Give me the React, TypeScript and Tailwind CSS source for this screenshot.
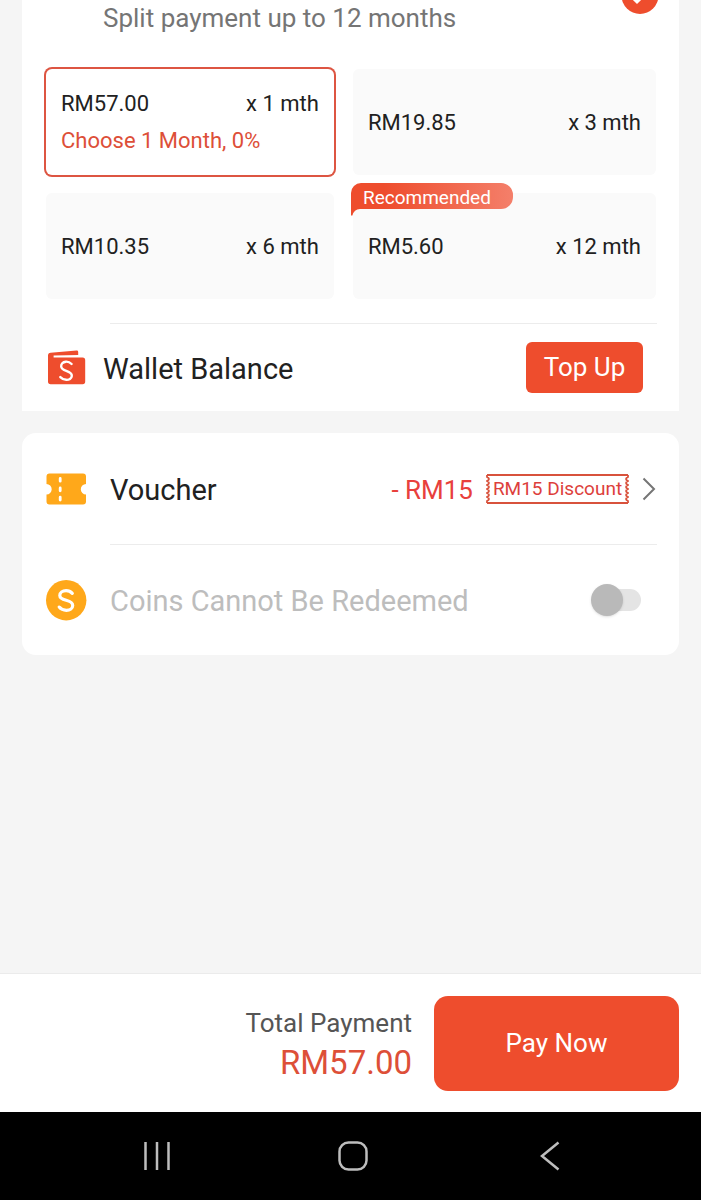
import { useState } from 'react';

interface Plan {
  months: number;
  amount: string;
  note?: string;
  recommended?: boolean;
}

const PLANS: Plan[] = [
  { months: 1, amount: 'RM57.00', note: 'Choose 1 Month, 0%' },
  { months: 3, amount: 'RM19.85' },
  { months: 6, amount: 'RM10.35' },
  { months: 12, amount: 'RM5.60', recommended: true },
];

function WalletIcon() {
  return (
    <svg width="38" height="36" viewBox="0 0 38 36" aria-hidden="true">
      <path d="M0 5.6Q0 3 2.6 2.8L28.6 .6Q30.2 .5 30.2 2V5L5.6 5.6V7.6H34.6Q37.2 7.6 37.2 10.2V31.6Q37.2 34.2 34.6 34.2H2.6Q0 34.2 0 31.6Z" fill="#ee4d2d" />
      <path d="M23.6 14C21.8 12.2 19.8 11.5 17.8 11.7C14.8 12 12.9 14 13.2 16.6C13.5 19 15.8 20 18.3 20.9C21.4 22 24 23.1 23.8 25.9C23.6 28.5 21 30 18.2 29.8C15.8 29.7 13.9 28.7 12.3 27.1" fill="none" stroke="#fff" strokeWidth="2.4" strokeLinecap="round" />
    </svg>
  );
}

function VoucherIcon() {
  return (
    <svg width="41" height="32" viewBox="0 0 41 32" aria-hidden="true">
      <path d="M3.5.5H37Q40 .5 40 3.5V11A5.2 5.2 0 0 0 40 21.4V28.5Q40 31.5 37 31.5H3.5Q.5 31.5 .5 28.5V21.4A5.2 5.2 0 0 0 .5 11V3.5Q.5 .5 3.5 .5Z" fill="#ffa81a" />
      <path d="M14.2 5.5V8.2M14.2 15V17.8M14.2 24.2V27" stroke="#fff" strokeWidth="2.8" strokeLinecap="round" />
    </svg>
  );
}

function CoinIcon() {
  return (
    <svg width="41" height="41" viewBox="0 0 41 41" aria-hidden="true">
      <circle cx="20.2" cy="20.2" r="20.2" fill="#ffa81a" />
      <path d="M26.3 13.4C24.5 11.4 22.5 10.6 20.1 10.6C16.5 10.6 13.8 12.6 13.8 15.4C13.8 18.4 16.7 19.3 20.2 20.2C23.9 21.1 26.7 22.3 26.7 25.5C26.7 28.4 23.9 30.3 20.4 30.3C17.4 30.3 14.9 29.2 13.2 27.1" fill="none" stroke="#fff" strokeWidth="3.2" strokeLinecap="round" />
    </svg>
  );
}

/** Ribbon that hangs over the corner of the recommended plan */
function RecommendedTag() {
  return (
    <span className="absolute -top-2.5 -left-0.5 flex h-[26px] w-[162px] items-center pt-0.5 pl-3 text-[19px] text-white">
      <svg className="absolute top-0 left-0" width="162" height="34" viewBox="0 0 162 34" aria-hidden="true">
        <defs>
          <linearGradient id="tag" x1="0" x2="1">
            <stop offset="0.2" stopColor="#ee4d2d" />
            <stop offset="1" stopColor="#f47f6a" />
          </linearGradient>
        </defs>
        <path d="M10 0H150A12 12 0 0 1 162 12V14A12 12 0 0 1 150 26H9Q3 26 1.4 32.6H0V10A10 10 0 0 1 10 0Z" fill="url(#tag)" />
      </svg>
      <span className="relative">Recommended</span>
    </span>
  );
}

function PlanOption({ plan, checked, onSelect }: { plan: Plan; checked: boolean; onSelect: () => void }) {
  return (
    <label
      className={`relative flex h-[106px] cursor-pointer flex-col justify-center rounded-md px-[15px] text-[22px] leading-[37px] text-[#212121] ${
        checked ? 'bg-white ring-2 ring-[#dd5542]' : 'bg-[#fafafa]'
      }`}
    >
      <input type="radio" name="plan" className="sr-only" checked={checked} onChange={onSelect} />
      {plan.recommended && <RecommendedTag />}
      <span className="flex justify-between">
        <span>{plan.amount}</span>
        <span>x {plan.months} mth</span>
      </span>
      {checked && plan.note && <span className="text-[#dd4f38]">{plan.note}</span>}
    </label>
  );
}

function DiscountBadge() {
  return (
    <span className="relative flex h-[30px] w-[143px] items-center justify-center pt-0.5 text-[19px] text-[#dd3f3c]">
      <svg className="absolute inset-0" width="143" height="30" viewBox="0 0 143 30" fill="none" stroke="#d8523c" strokeWidth="1.8" aria-hidden="true">
        <path d="M1 1H142M1 29H142" />
        <path d="M1 1V3Q5 5 1 7Q5 9 1 11Q5 13 1 15Q5 17 1 19Q5 21 1 23Q5 25 1 27V29" />
        <path d="M142 1V3Q138 5 142 7Q138 9 142 11Q138 13 142 15Q138 17 142 19Q138 21 142 23Q138 25 142 27V29" />
      </svg>
      <span className="relative">RM15 Discount</span>
    </span>
  );
}

export default function App() {
  const [months, setMonths] = useState(1);

  return (
    <div className="flex min-h-screen flex-col bg-[#f5f5f5] font-[Roboto,sans-serif] text-[#212121]">
      <main className="flex flex-1 flex-col gap-[22px] px-[22px] pb-6">
        <section className="bg-white">
          <div className="flex h-[69px] items-start justify-between pr-5 pl-[81px]">
            <p className="text-[26px] leading-9 text-[#757575]">Split payment up to 12 months</p>
            <svg width="38" height="15" viewBox="0 23 38 15" role="img" aria-label="Selected">
              <circle cx="19" cy="18.5" r="18.5" fill="#ee4d2d" />
              <path d="M10 19L16 25L27 14" fill="none" stroke="#fff" strokeWidth="3" />
            </svg>
          </div>

          <div
            role="radiogroup"
            aria-label="Instalment plan"
            className="grid grid-cols-[19fr_20fr] gap-x-[19px] gap-y-[18px] pr-[23px] pl-6"
          >
            {PLANS.map((plan) => (
              <PlanOption
                key={plan.months}
                plan={plan}
                checked={plan.months === months}
                onSelect={() => setMonths(plan.months)}
              />
            ))}
          </div>

          <div className="mt-6 mr-[22px] ml-[88px] border-t border-[#ececec]" />
          <div className="flex h-[87px] items-center pr-9 pl-6">
            <div className="w-[57px] pl-0.5">
              <WalletIcon />
            </div>
            <h2 className="flex-1 pt-1 text-[29px]">Wallet Balance</h2>
            <button type="button" className="h-[51px] w-[117px] rounded-md bg-[#ee4d2d] text-[26px] text-white">
              Top Up
            </button>
          </div>
        </section>

        <section className="rounded-[14px] bg-white pr-[22px] pl-6">
          <div className="flex h-[111px] items-center">
            <div className="w-16">
              <VoucherIcon />
            </div>
            <h2 className="flex-1 pt-1 text-[29px]">Voucher</h2>
            <button type="button" className="flex items-center gap-[13px]">
              <span className="pt-1 text-[26px] text-[#e8403c]">- RM15</span>
              <DiscountBadge />
              <svg width="15" height="24" viewBox="0 0 15 24" fill="none" stroke="#757575" strokeWidth="2" aria-hidden="true">
                <path d="M1.5 1.5L12 12L1.5 22.5" />
              </svg>
            </button>
          </div>
          <div className="ml-16 border-t border-[#ececec]" />
          <div className="flex h-[110px] items-center pr-4">
            <div className="w-16">
              <CoinIcon />
            </div>
            <label htmlFor="coins" className="flex-1 pt-1 text-[29px] text-[#bdbdbd]">
              Coins Cannot Be Redeemed
            </label>
            <span className="relative flex h-8 w-[50px] items-center">
              <span className="ml-2 h-[22px] w-[42px] rounded-full bg-[#e4e4e4]" />
              <input
                id="coins"
                type="checkbox"
                role="switch"
                disabled
                className="absolute top-0 left-0 size-8 appearance-none rounded-full bg-[#b9b9b9] shadow"
              />
            </span>
          </div>
        </section>
      </main>

      <footer>
        <div className="flex h-[139px] items-center justify-end gap-[22px] border-t border-[#ebebeb] bg-white pr-[22px]">
          <div className="text-right">
            <p className="text-[26px] leading-10 text-[#555]">Total Payment</p>
            <p className="text-[33px] leading-10 text-[#dd4f38]">RM57.00</p>
          </div>
          <button type="button" className="h-[95px] w-[245px] rounded-[14px] bg-[#ee4d2d] text-[26px] text-white">
            Pay Now
          </button>
        </div>

        <nav aria-label="System" className="grid h-[88px] grid-cols-3 place-items-center bg-black pr-[53px] pl-[59px] text-[#bdbdbd]">
          <button type="button" aria-label="Recent apps">
            <svg width="28" height="30" viewBox="0 0 28 30" stroke="currentColor" strokeWidth="2.5" aria-hidden="true">
              <path d="M2.5 1V29M14 1V29M25.5 1V29" />
            </svg>
          </button>
          <button type="button" aria-label="Home">
            <svg width="30" height="30" viewBox="0 0 30 30" fill="none" stroke="currentColor" strokeWidth="2.5" aria-hidden="true">
              <rect x="1.5" y="1.5" width="27" height="27" rx="9" />
            </svg>
          </button>
          <button type="button" aria-label="Back">
            <svg width="20" height="30" viewBox="0 0 20 30" fill="none" stroke="currentColor" strokeWidth="2.5" aria-hidden="true">
              <path d="M18.5 1.5L2 15L18.5 28.5" />
            </svg>
          </button>
        </nav>
      </footer>
    </div>
  );
}
